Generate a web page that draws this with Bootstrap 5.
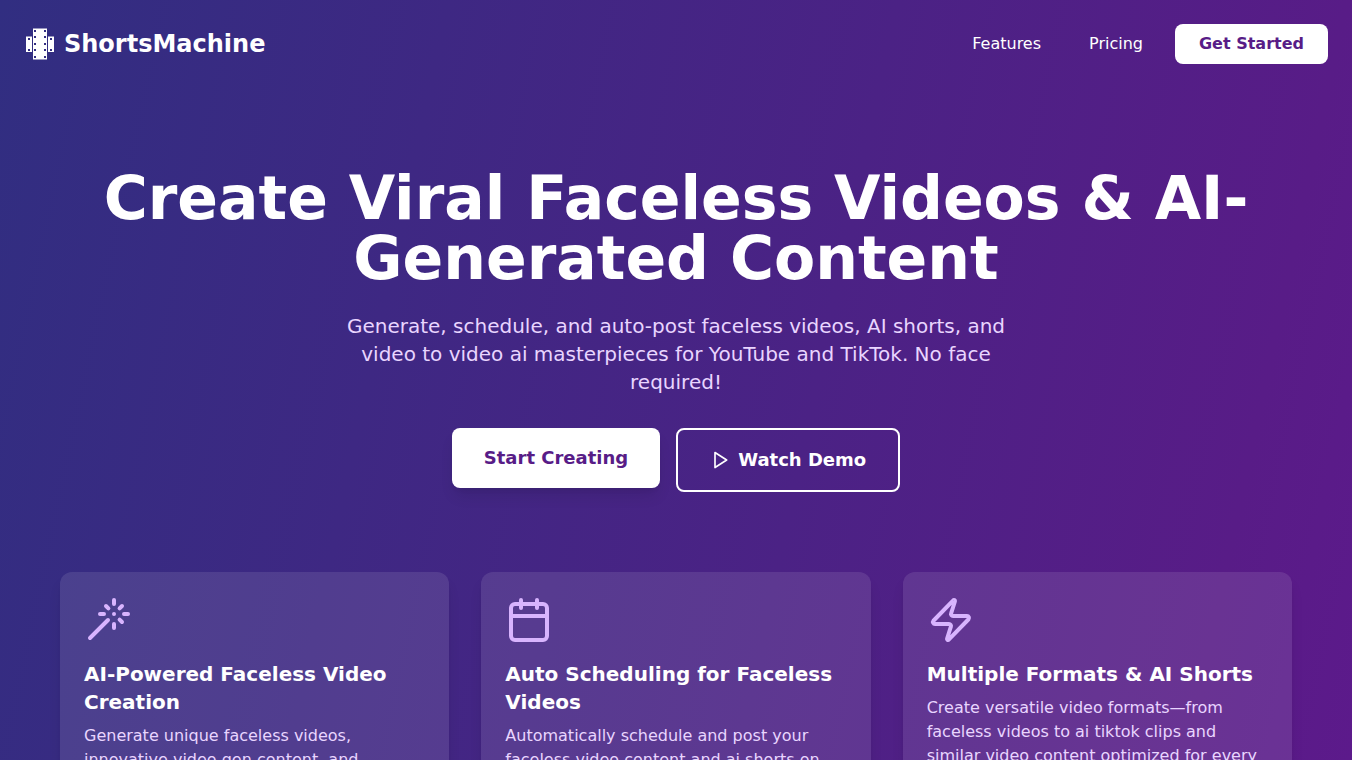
<!DOCTYPE html>
<html lang="en">
<head>
<meta charset="utf-8">
<meta name="viewport" content="width=device-width, initial-scale=1">
<title>ShortsMachine</title>
<link href="https://cdn.jsdelivr.net/npm/bootstrap@5.3.0/dist/css/bootstrap.min.css" rel="stylesheet">
<style>
  body {
    font-family: "DejaVu Sans", sans-serif;
    color: #fff;
    background: linear-gradient(102deg, #312e81 0%, #581c87 89%, #5c1a8b 100%) fixed;
    min-height: 100vh;
  }
  .brand { font-size: 24px; line-height: 32px; }
  .menu-link { color: #fff; padding: 8px 16px; }
  .menu-link:hover { color: #e9d5ff; }
  .btn-plain {
    --bs-btn-bg: #fff; --bs-btn-color: #581c87; --bs-btn-border-color: #fff;
    --bs-btn-hover-bg: #f3e8ff; --bs-btn-hover-color: #581c87; --bs-btn-hover-border-color: #f3e8ff;
    --bs-btn-border-radius: 8px; --bs-btn-border-width: 0;
    --bs-btn-padding-x: 24px; --bs-btn-padding-y: 8px; --bs-btn-font-weight: 700;
  }
  .btn-big {
    --bs-btn-padding-x: 32px; --bs-btn-padding-y: 16px; --bs-btn-font-size: 18px;
    --bs-btn-line-height: 28px; --bs-btn-border-radius: 8px; --bs-btn-font-weight: 700;
  }
  .btn-outline-light.btn-big {
    --bs-btn-border-width: 2px; --bs-btn-color: #fff; --bs-btn-border-color: #fff;
  }
  .btn-raised { box-shadow: 0 10px 15px -3px rgba(0,0,0,.1), 0 4px 6px -4px rgba(0,0,0,.1); }
  .page-wrap { max-width: 1280px; }
  .hero { padding: 80px 0; }
  .hero-title { font-size: 60px; line-height: 60px; }
  .hero-text { font-size: 20px; line-height: 28px; max-width: 672px; color: #e9d5ff; }
  .feature-row { --bs-gutter-x: 32px; --bs-gutter-y: 32px; margin-top: 0; }
  .feature-row > * { margin-top: 0; margin-bottom: 32px; }
  .feature {
    background: rgba(255,255,255,.1);
    border-radius: 12px;
    box-shadow: 0 10px 15px -3px rgba(0,0,0,.1), 0 4px 6px -4px rgba(0,0,0,.1);
  }
  .feature-icon { color: #d8b4fe; }
  .feature-title { font-size: 20px; line-height: 28px; }
  .feature-text { line-height: 24px; color: #e9d5ff; }
</style>
</head>
<body>
<header class="d-flex justify-content-between align-items-center p-4">
  <a href="#" class="brand d-flex align-items-center gap-2 fw-bold text-white text-decoration-none">
    <svg width="32" height="32" viewBox="0 0 32 32" aria-hidden="true">
      <path fill="#fff" fill-rule="evenodd" d="M9 .5h14v31H9zM10 2v2h2V2zM20 2v2h2V2zM10 8v2h2V8zM20 8v2h2V8zM10 15v2h2v-2zM20 15v2h2v-2zM10 21v2h2v-2zM20 21v2h2v-2zM10 28v2h2v-2zM20 28v2h2v-2z"/>
      <path fill="#fff" fill-rule="evenodd" d="M2 8.500h6v15.500H2zM4 10v2h2v-2zM4 21v2h2v-2zM24 8.500h6v15.500h-6zM26 10v2h2v-2zM26 21v2h2v-2z"/>
    </svg>
    <span>ShortsMachine</span>
  </a>
  <nav class="d-flex align-items-center gap-3">
    <a href="#features" class="menu-link text-decoration-none">Features</a>
    <a href="#pricing" class="menu-link text-decoration-none">Pricing</a>
    <button type="button" class="btn btn-plain">Get Started</button>
  </nav>
</header>

<main class="page-wrap mx-auto px-4">
  <section class="hero text-center">
    <h1 class="hero-title fw-bold mb-4">Create Viral Faceless Videos &amp; AI-Generated Content</h1>
    <p class="hero-text mx-auto mb-0">Generate, schedule, and auto-post faceless videos, AI shorts, and video to video ai masterpieces for YouTube and TikTok. No face required!</p>
    <div class="d-flex justify-content-center align-items-start gap-3 pt-2 mt-4">
      <button type="button" class="btn btn-plain btn-big btn-raised">Start Creating</button>
      <button type="button" class="btn btn-outline-light btn-big d-flex align-items-center gap-2">
        <svg width="20" height="20" viewBox="0 0 24 24" fill="none" stroke="currentColor" stroke-width="2" stroke-linecap="round" stroke-linejoin="round" aria-hidden="true"><path d="M6 3l14 9-14 9z"/></svg>
        Watch Demo
      </button>
    </div>
  </section>

  <section id="features" class="row feature-row">
    <div class="col-12 col-md-4">
      <article class="feature p-4 h-100">
        <svg class="feature-icon d-block mb-3" width="48" height="48" viewBox="0 0 24 24" fill="none" stroke="currentColor" stroke-width="2" stroke-linecap="round" stroke-linejoin="round" aria-hidden="true"><path d="M15 4V2M15 16v-2M8 9h2M20 9h2M17.800 11.800L19 13M15 9h.01M17.800 6.200L19 5M3 21l9-9M12.200 6.200L11 5"/></svg>
        <h2 class="feature-title fw-bold mb-2">AI-Powered Faceless Video Creation</h2>
        <p class="feature-text mb-0">Generate unique faceless videos, innovative video gen content, and creative shorts with AI.</p>
      </article>
    </div>
    <div class="col-12 col-md-4">
      <article class="feature p-4 h-100">
        <svg class="feature-icon d-block mb-3" width="48" height="48" viewBox="0 0 24 24" fill="none" stroke="currentColor" stroke-width="2" stroke-linecap="round" stroke-linejoin="round" aria-hidden="true"><rect x="3" y="4" width="18" height="18" rx="2"/><path d="M8 2v4M16 2v4M3 10h18"/></svg>
        <h2 class="feature-title fw-bold mb-2">Auto Scheduling for Faceless Videos</h2>
        <p class="feature-text mb-0">Automatically schedule and post your faceless video content and ai shorts on YouTube and TikTok.</p>
      </article>
    </div>
    <div class="col-12 col-md-4">
      <article class="feature p-4 h-100">
        <svg class="feature-icon d-block mb-3" width="48" height="48" viewBox="0 0 24 24" fill="none" stroke="currentColor" stroke-width="2" stroke-linecap="round" stroke-linejoin="round" aria-hidden="true"><path d="M4 14a1 1 0 0 1-.78-1.630l9.900-10.200a.5.5 0 0 1 .86.460l-1.920 6.020A1 1 0 0 0 13 10h7a1 1 0 0 1 .78 1.630l-9.900 10.200a.5.5 0 0 1-.86-.460l1.920-6.020A1 1 0 0 0 11 14z"/></svg>
        <h2 class="feature-title fw-bold mb-2">Multiple Formats &amp; AI Shorts</h2>
        <p class="feature-text mb-0">Create versatile video formats—from faceless videos to ai tiktok clips and similar video content optimized for every platform.</p>
      </article>
    </div>
  </section>
</main>
<script src="https://cdn.jsdelivr.net/npm/bootstrap@5.3.0/dist/js/bootstrap.bundle.min.js"></script>
</body>
</html>
